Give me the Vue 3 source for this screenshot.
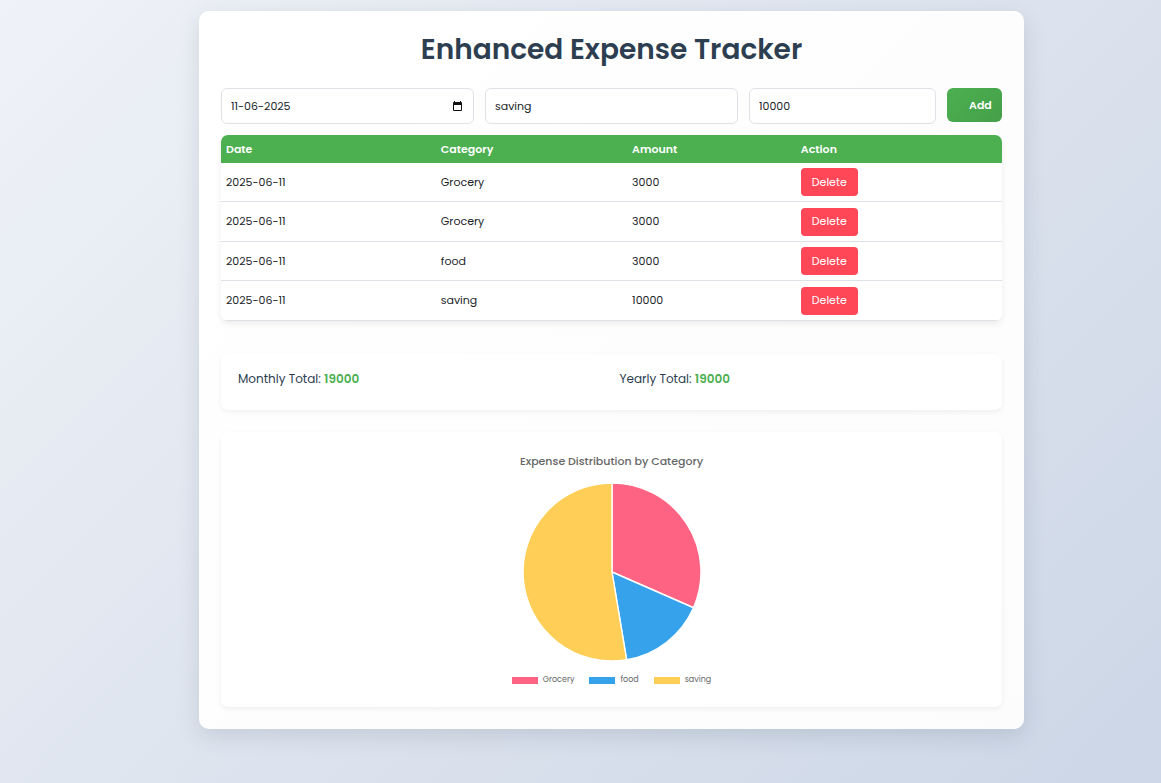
<script setup>
import { computed, ref } from 'vue'

const date = ref('11-06-2025')
const category = ref('saving')
const amount = ref('10000')

const expenses = ref([
  { id: 1, date: '2025-06-11', category: 'Grocery', amount: 3000 },
  { id: 2, date: '2025-06-11', category: 'Grocery', amount: 3000 },
  { id: 3, date: '2025-06-11', category: 'food', amount: 3000 },
  { id: 4, date: '2025-06-11', category: 'saving', amount: 10000 },
])

const palette = ['#ff6384', '#36a2eb', '#ffce56']

const total = computed(() => expenses.value.reduce((sum, e) => sum + e.amount, 0))

const slices = computed(() => {
  const sums = new Map()
  for (const e of expenses.value) sums.set(e.category, (sums.get(e.category) || 0) + e.amount)
  let start = 0
  return [...sums].map(([name, value], i) => {
    const end = start + (value / total.value) * Math.PI * 2
    const point = (a) => `${(89 + 89 * Math.sin(a)).toFixed(2)} ${(89 - 89 * Math.cos(a)).toFixed(2)}`
    const d = `M89 89L${point(start)}A89 89 0 ${end - start > Math.PI ? 1 : 0} 1 ${point(end)}Z`
    start = end
    return { name, d, color: palette[i % palette.length] }
  })
})

function addExpense() {
  const iso = date.value.split('-').reverse().join('-')
  expenses.value.push({ id: Date.now(), date: iso, category: category.value, amount: Number(amount.value) })
}

function remove(id) {
  expenses.value = expenses.value.filter((e) => e.id !== id)
}
</script>

<template>
  <div class="page">
    <main class="card">
      <h1>Enhanced Expense Tracker</h1>

      <form class="entry" @submit.prevent="addExpense">
        <div class="date-field">
          <input v-model="date" type="text" aria-label="Date" />
          <button type="button" class="picker" aria-label="Open calendar">
            <svg width="9" height="10" viewBox="0 0 9 10">
              <path d="M1 0h1v1h5V0h1v1a1 1 0 0 1 1 1v7a1 1 0 0 1-1 1H1a1 1 0 0 1-1-1V2a1 1 0 0 1 1-1zM1 4v5h7V4z" fill="#111" fill-rule="evenodd" />
            </svg>
          </button>
        </div>
        <input v-model="category" type="text" aria-label="Category" />
        <input v-model="amount" type="text" inputmode="numeric" aria-label="Amount" />
        <button type="submit" class="add">Add</button>
      </form>

      <table>
        <colgroup>
          <col class="c-date" />
          <col class="c-category" />
          <col class="c-amount" />
          <col />
        </colgroup>
        <thead>
          <tr>
            <th scope="col">Date</th>
            <th scope="col">Category</th>
            <th scope="col">Amount</th>
            <th scope="col">Action</th>
          </tr>
        </thead>
        <tbody>
          <tr v-for="e in expenses" :key="e.id">
            <td>{{ e.date }}</td>
            <td>{{ e.category }}</td>
            <td>{{ e.amount }}</td>
            <td><button type="button" class="delete" @click="remove(e.id)">Delete</button></td>
          </tr>
        </tbody>
      </table>

      <section class="totals">
        <p>Monthly Total: <strong>{{ total }}</strong></p>
        <p>Yearly Total: <strong>{{ total }}</strong></p>
      </section>

      <section class="chart">
        <h2>Expense Distribution by Category</h2>
        <svg class="pie" width="178" height="178" viewBox="0 0 178 178" role="img" aria-label="Expense distribution">
          <path v-for="s in slices" :key="s.name" :d="s.d" :fill="s.color" stroke="#fff" stroke-width="1.4" stroke-linejoin="round" />
        </svg>
        <ul>
          <li v-for="s in slices" :key="s.name">
            <svg width="26" height="7" viewBox="0 0 26 7" aria-hidden="true"><rect width="26" height="7" :fill="s.color" /></svg>
            {{ s.name }}
          </li>
        </ul>
      </section>
    </main>
  </div>
</template>

<style>
body {
  margin: 0;
}
</style>

<style scoped>
.page,
.page * {
  box-sizing: border-box;
}

.page {
  min-height: 100vh;
  padding: 11px 0 11px 62px;
  font-family: Poppins, Inter, "Open Sans", sans-serif;
  font-size: 11px;
  color: #212529;
  background: linear-gradient(135deg, #eff2f7 0%, #ccd6e6 100%);
}

.card {
  max-width: 825px;
  margin: 0 auto;
  padding: 22px;
  border-radius: 10px;
  background: linear-gradient(135deg, #ffffff, #fcfcfc);
  box-shadow: 0 7px 22px rgba(31, 45, 61, 0.13);
}

h1 {
  margin: 0 0 22px;
  font-size: 28px;
  line-height: 33px;
  font-weight: 600;
  text-align: center;
  color: #2c3e50;
}

.entry {
  display: grid;
  grid-template-columns: 253fr 253fr 187fr 55px;
  align-items: start;
  gap: 11px;
  margin-bottom: 11px;
}

input {
  width: 100%;
  height: 36px;
  padding: 0 9px;
  border: 1px solid #dee2e6;
  border-radius: 6px;
  background: #fff;
  font: inherit;
  color: inherit;
}

button {
  border: 0;
  font: inherit;
  cursor: pointer;
}

.date-field {
  position: relative;
}

.picker {
  position: absolute;
  top: 0;
  right: 12px;
  display: flex;
  align-items: center;
  height: 36px;
  padding: 0;
  background: none;
}

.add {
  height: 34px;
  padding: 0 11px 0 22px;
  border-radius: 6px;
  background: linear-gradient(135deg, #4caf50, #45a049);
  font-weight: 600;
  color: #fff;
}

table {
  width: 100%;
  table-layout: fixed;
  border-spacing: 0;
  border-radius: 7px;
  overflow: hidden;
  background: #fff;
  box-shadow: 0 3px 6px rgba(0, 0, 0, 0.07);
}

.c-date {
  width: 27.5%;
}

.c-category {
  width: 24.5%;
}

.c-amount {
  width: 21.6%;
}

th {
  height: 28px;
  padding: 0 5px;
  background: #4caf50;
  font-weight: 600;
  text-align: left;
  color: #fff;
}

td {
  height: 39px;
  padding: 0 5px;
  border-bottom: 1px solid #dee2e6;
}

tr:nth-child(even) td {
  height: 40px;
}

.delete {
  display: block;
  width: 57px;
  height: 28px;
  padding: 0;
  border-radius: 4px;
  background: #ff4757;
  color: #fff;
}

.totals {
  display: grid;
  grid-template-columns: 1fr 1fr;
  margin-top: 33px;
  padding: 16px 17px 22px;
  border-radius: 7px;
  background: #fff;
  box-shadow: 0 2px 5px rgba(0, 0, 0, 0.06);
}

.totals p {
  margin: 0;
  font-size: 12px;
  line-height: 18px;
  color: #2c3e50;
}

.totals p + p {
  padding-left: 8px;
}

.totals strong {
  font-weight: 600;
  color: #4caf50;
}

.chart {
  display: flex;
  flex-direction: column;
  align-items: center;
  margin-top: 22px;
  padding: 22px 22px 21px;
  border-radius: 7px;
  background: #fff;
  box-shadow: 0 2px 5px rgba(0, 0, 0, 0.06);
}

h2 {
  margin: 0 0 15px;
  font-size: 11px;
  line-height: 14px;
  font-weight: 500;
  color: #666;
}

.pie {
  display: block;
}

ul {
  display: flex;
  gap: 15px;
  margin: 13px 0 0;
  padding: 0;
  list-style: none;
  font-size: 8px;
  line-height: 12px;
  color: #666;
}

li {
  display: flex;
  align-items: center;
  gap: 5px;
}
</style>
